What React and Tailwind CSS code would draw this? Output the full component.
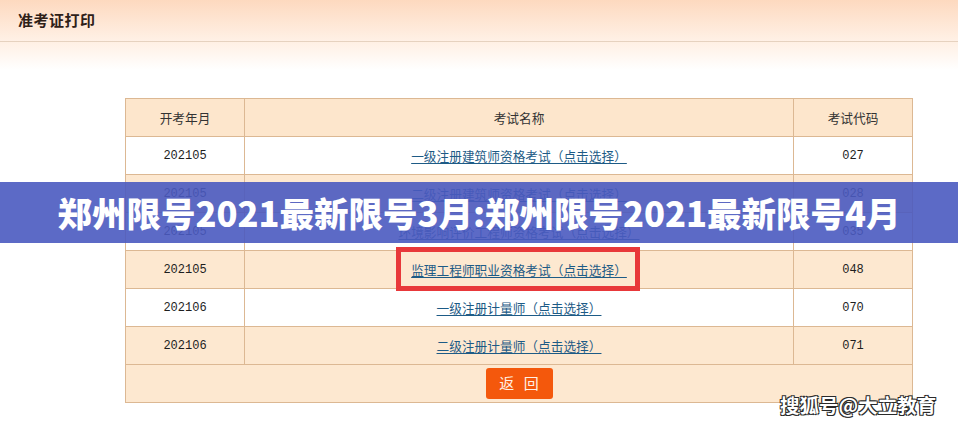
const rows = [
  { month: "202105", name: "一级注册建筑师资格考试（点击选择）", code: "027", bg: "bg-white" },
  { month: "202105", name: "二级注册建筑师资格考试（点击选择）", code: "028", bg: "bg-[#fde8d0]" },
  { month: "202105", name: "环境影响评价工程师资格考试（点击选择）", code: "035", bg: "bg-white" },
  { month: "202105", name: "监理工程师职业资格考试（点击选择）", code: "048", bg: "bg-[#fde8d0]", marked: true },
  { month: "202106", name: "一级注册计量师（点击选择）", code: "070", bg: "bg-white" },
  { month: "202106", name: "二级注册计量师（点击选择）", code: "071", bg: "bg-[#fde8d0]" },
];

const cjk = "font-['Noto_Sans_CJK_SC',sans-serif]";
const cell = "border border-[#dcb893] h-[38px] text-center align-middle";

function Header() {
  return (
    <div>
      <div className="h-[42px] flex items-center px-[18px] bg-gradient-to-b from-[#fdd9bf] to-[#fff1e6] border-b border-[#e6d2bf]">
        <h1 className={`${cjk} text-[15px] font-bold text-[#2e2018] tracking-[0.5px]`}>准考证打印</h1>
      </div>
      <div className="h-[28px] bg-gradient-to-b from-[#fff0e4] to-white" />
    </div>
  );
}

function ExamRow({ row }) {
  return (
    <tr className={row.bg}>
      <td className={`${cell} font-['Liberation_Mono',monospace] text-[12px] text-[#1e1e1e]`}>{row.month}</td>
      <td className={cell}>
        <span className="relative inline-block">
          <a href="#" className={`${cjk} text-[12.7px] text-[#1d5b86] underline underline-offset-2`}>
            {row.name}
          </a>
          {row.marked && (
            <span className="absolute -left-[15px] -right-[13px] -top-[13px] -bottom-[12px] border-[5px] border-[#e8383a]" />
          )}
        </span>
      </td>
      <td className={`${cell} font-['Liberation_Mono',monospace] text-[12px] text-[#1e1e1e]`}>{row.code}</td>
    </tr>
  );
}

export default function App() {
  return (
    <div className="relative w-[958px] h-[427px] bg-white overflow-hidden">
      <Header />

      <div className="pl-[125px] pt-[28px]">
        <table className={`w-[788px] border-collapse ${cjk} text-[12.7px] text-[#333]`}>
          <colgroup>
            <col className="w-[119px]" />
            <col className="w-[549px]" />
            <col className="w-[119px]" />
          </colgroup>
          <thead>
            <tr className="bg-[#fde6cc]">
              <th className={`${cell} font-normal`}>开考年月</th>
              <th className={`${cell} font-normal`}>考试名称</th>
              <th className={`${cell} font-normal`}>考试代码</th>
            </tr>
          </thead>
          <tbody>
            {rows.map((row) => (
              <ExamRow key={row.code} row={row} />
            ))}
            <tr className="bg-[#fde8d0]">
              <td colSpan={3} className={cell}>
                <button className="w-[67px] h-[31px] rounded-[3px] bg-[#f4580c] text-[#fff0e6] text-[15px] tracking-[3px] pl-[3px]">
                  返 回
                </button>
              </td>
            </tr>
          </tbody>
        </table>
      </div>

      <div className="absolute left-0 right-0 top-[182px] h-[61px] bg-[#4a5ac0]/[0.9] flex items-center justify-center">
        <p className={`${cjk} text-[34.5px] font-black text-white leading-none whitespace-nowrap`}>
          郑州限号2021最新限号3月:郑州限号2021最新限号4月
        </p>
      </div>

      <div
        className={`absolute left-[780px] top-[395px] ${cjk} text-[19.5px] font-bold text-white leading-none whitespace-nowrap [text-shadow:1px_1px_0_#2a2a2a,-1px_-1px_0_#2a2a2a,1px_-1px_0_#2a2a2a,-1px_1px_0_#2a2a2a]`}
      >
        搜狐号@大立教育
      </div>
    </div>
  );
}
